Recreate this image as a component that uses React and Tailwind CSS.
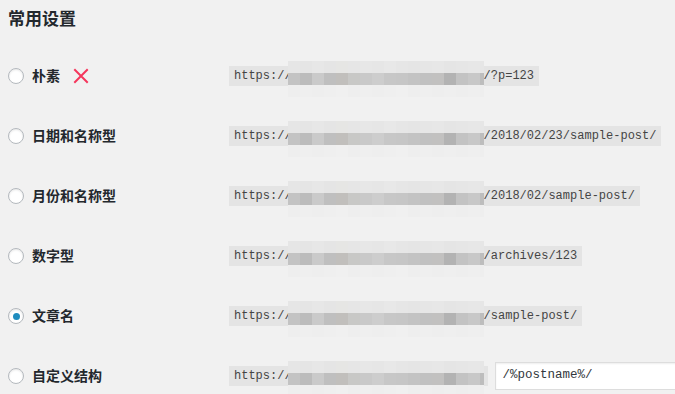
const topBand = [
  "bg-[#e6e6e6]", "bg-[#e5e5e5]", "bg-[#e7e7e7]", "bg-[#e5e5e5]", "bg-[#e6e6e4]", "bg-[#e6e6e6]",
  "bg-[#e7e7e7]", "bg-[#e6e6e6]", "bg-[#e8e8e8]", "bg-[#e6e6e6]", "bg-[#e5e5e5]", "bg-[#e6e6e6]",
  "bg-[#e7e7e7]", "bg-[#e5e5e5]", "bg-[#e6e6e6]", "bg-[#e7e7e7]", "bg-[#e6e6e6]"
];
const midBand = [
  "bg-[#c3c3c3]", "bg-[#bcbcbc]", "bg-[#cacaca]", "bg-[#bfbfbf]", "bg-[#c1bfbc]", "bg-[#c8c8c6]",
  "bg-[#c9c9c9]", "bg-[#cdcdcd]", "bg-[#c7c7c7]", "bg-[#c6c6c6]", "bg-[#c3c3c3]", "bg-[#c1c1c1]",
  "bg-[#c2c1c0]", "bg-[#b3b3b3]", "bg-[#c3c3c3]", "bg-[#c8c8c8]", "bg-[#bdbdbd]"
];
const lowBand = [
  "bg-[#eeeeee]", "bg-[#efefef]", "bg-[#eeeeee]", "bg-[#efefef]", "bg-[#f0f0f0]", "bg-[#eeeeee]",
  "bg-[#efefef]", "bg-[#eeeeee]", "bg-[#efefef]", "bg-[#f0f0f0]", "bg-[#eeeeee]", "bg-[#efefef]",
  "bg-[#eeeeee]", "bg-[#efefef]", "bg-[#eeeeee]", "bg-[#efefef]", "bg-[#eeeeee]"
];

const Mosaic = () => (
  <div className="absolute left-[59px] top-[-5px] w-[196px] h-[36px] overflow-hidden flex flex-col">
    {[topBand, midBand, lowBand].map((band, i) => (
      <div key={i} className="flex h-[12px] shrink-0">
        {band.map((c, j) => (
          <div key={j} className={`w-[12px] h-[12px] shrink-0 ${c}`} />
        ))}
      </div>
    ))}
  </div>
);

const Radio = ({ checked }) => (
  <span className="w-4 h-4 shrink-0 rounded-full border border-[#b4b9be] bg-white shadow-[inset_0_1px_2px_rgba(0,0,0,0.1)] flex items-center justify-center">
    {checked && <span className="w-[7px] h-[7px] rounded-full bg-[#1e8cbe]" />}
  </span>
);

const rows = [
  { label: "朴素", suffix: "/?p=123", cross: true },
  { label: "日期和名称型", suffix: "/2018/02/23/sample-post/" },
  { label: "月份和名称型", suffix: "/2018/02/sample-post/" },
  { label: "数字型", suffix: "/archives/123" },
  { label: "文章名", suffix: "/sample-post/", checked: true },
  { label: "自定义结构", suffix: "", custom: true }
];

export default function App() {
  return (
    <div className="w-[675px] h-[394px] overflow-hidden bg-[#f1f1f1] text-[#444] font-['Liberation_Sans','Noto_Sans_CJK_SC',sans-serif]">
      <div className="h-[46px] pl-2 pt-[8px]">
        <h2 className="text-[17px] leading-[24px] font-semibold text-[#23282d]">常用设置</h2>
      </div>
      {rows.map((r) => (
        <div key={r.label} className="h-[60px] flex items-center">
          <div className="w-[229px] shrink-0 pl-2 flex items-center gap-2">
            <Radio checked={r.checked} />
            <span className="text-[14px] leading-5 font-semibold text-[#23282d]">{r.label}</span>
            {r.cross && (
              <svg width="16" height="16" viewBox="0 0 16 16" className="ml-[5px]">
                <path d="M2 2 L14 14 M14 2 L2 14" stroke="#f5365c" strokeWidth="2" strokeLinecap="square" />
              </svg>
            )}
          </div>
          <code className="relative h-[20px] mt-[-1px] flex items-center px-[5px] bg-[#e4e4e4] text-[12px] text-[#444] font-['Liberation_Mono',monospace] whitespace-pre">
            <span>https://</span>
            <span className={r.custom ? "inline-block w-[191px]" : "inline-block w-[192px]"} />
            {r.suffix && <span>{r.suffix}</span>}
            <Mosaic />
          </code>
          {r.custom && (
            <div className="ml-[7px] mt-[-1px] w-[260px] h-[28px] shrink-0 bg-white border border-[#dddddd] shadow-[inset_0_1px_2px_rgba(0,0,0,0.07)] flex items-center pl-[7px] text-[12.5px] text-[#32373c] font-['Liberation_Mono',monospace]">
              /%postname%/
            </div>
          )}
        </div>
      ))}
    </div>
  );
}
